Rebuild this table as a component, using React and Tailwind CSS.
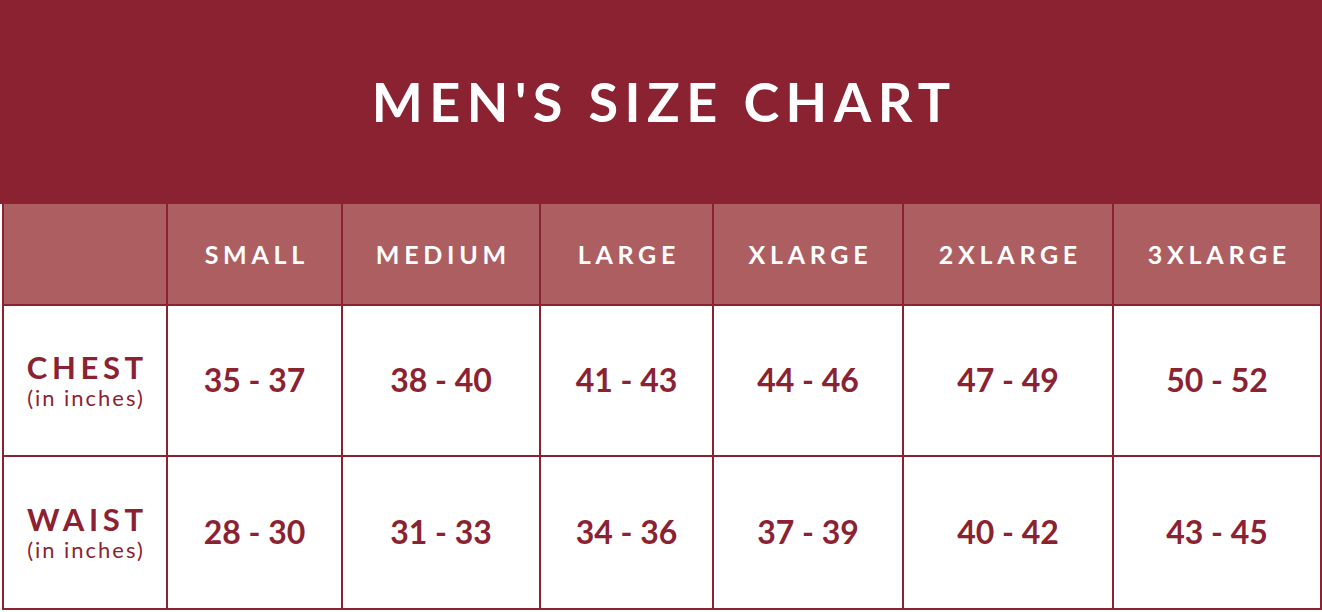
import React from "react";

const sizes = ["SMALL", "MEDIUM", "LARGE", "XLARGE", "2XLARGE", "3XLARGE"];
const rows = [
  { label: "CHEST", values: ["35 - 37", "38 - 40", "41 - 43", "44 - 46", "47 - 49", "50 - 52"] },
  { label: "WAIST", values: ["28 - 30", "31 - 33", "34 - 36", "37 - 39", "40 - 42", "43 - 45"] },
];

export default function App() {
  return (
    <div
      className="w-[1322px] h-[612px] bg-white overflow-hidden"
      style={{ fontFamily: "Lato, 'Open Sans', sans-serif" }}
    >
      <div className="h-[204px] bg-[#8b2232] flex items-center justify-center">
        <h1 className="text-white font-bold text-[54px] tracking-[0.12em] leading-none pl-[0.12em]">
          MEN'S SIZE CHART
        </h1>
      </div>
      <div className="ml-[2px] w-[1320px] bg-[#8b2232] px-[2px] pb-[2px] grid grid-cols-[162px_173px_196px_171px_188px_208px_206px] grid-rows-[100px_149px_151px] gap-[2px]">
        <div className="bg-[#ad5e61]" />
        {sizes.map((s) => (
          <div key={s} className="bg-[#ad5e61] flex items-center justify-center">
            <span className="text-white font-bold text-[25px] tracking-[0.19em] pl-[0.19em] leading-none">
              {s}
            </span>
          </div>
        ))}
        {rows.map((r) => (
          <React.Fragment key={r.label}>
            <div className="bg-white flex flex-col items-center justify-center text-[#8b2232] pt-[2px]">
              <span className="font-bold text-[31px] tracking-[0.15em] pl-[0.15em] leading-[31px]">
                {r.label}
              </span>
              <span className="text-[22px] tracking-[0.09em] pl-[0.09em] leading-[26px] mt-[2px]">
                (in inches)
              </span>
            </div>
            {r.values.map((v) => (
              <div key={v} className="bg-white flex items-center justify-center">
                <span className="text-[#8b2232] font-bold text-[32px] leading-none pb-[1px]">{v}</span>
              </div>
            ))}
          </React.Fragment>
        ))}
      </div>
    </div>
  );
}
